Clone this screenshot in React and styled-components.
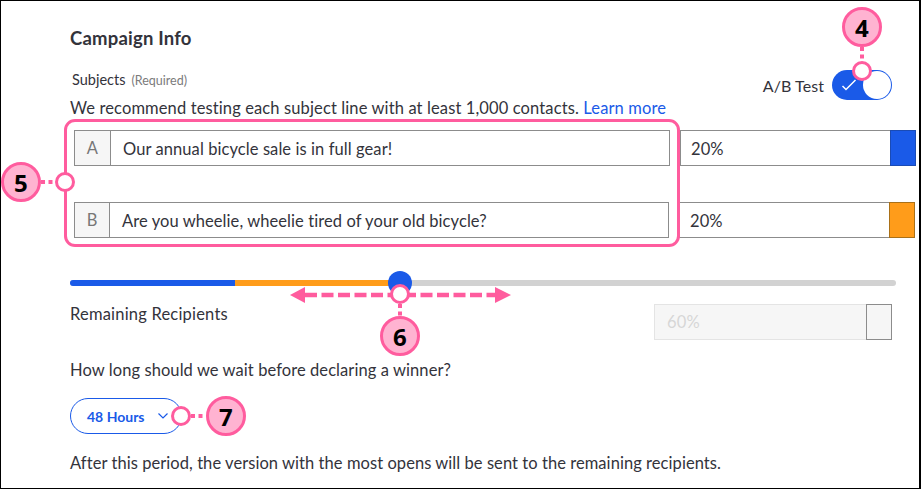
import React from 'react';
import styled, { createGlobalStyle } from 'styled-components';

const GlobalStyle = createGlobalStyle`
  html, body {
    margin: 0;
    padding: 0;
    background: #fff;
  }
  * {
    box-sizing: border-box;
  }
`;

const Frame = styled.div`
  position: relative;
  width: 921px;
  height: 489px;
  padding: 25px 0 0 69px;
  border: 1px solid #000;
  border-right-width: 2px;
  background: #fff;
  color: #33333b;
  font-family: Lato, "Liberation Sans", sans-serif;
  font-size: 16.5px;
  letter-spacing: 0.08px;
  overflow: hidden;
`;

const Column = styled.div`
  width: 826px;
`;

const Title = styled.h2`
  margin: 0 0 20px;
  font-size: 18.5px;
  font-weight: 700;
  letter-spacing: 0.2px;
  line-height: 24px;
`;

const TopRow = styled.div`
  display: flex;
  justify-content: space-between;
  height: 30px;
`;

const FieldLabel = styled.div`
  margin-left: 2px;
  font-size: 14.5px;
  letter-spacing: 0;
  line-height: 20px;
`;

const Required = styled.span`
  margin-left: 6px;
  font-size: 12.5px;
  color: #7b7b7b;
`;

const ToggleGroup = styled.div`
  display: flex;
  align-items: center;
  gap: 8px;
  margin-right: 4px;
  font-size: 16px;
`;

const Toggle = styled.div`
  display: flex;
  align-items: center;
  justify-content: space-between;
  width: 60px;
  height: 30px;
  padding: 0 1px 0 9px;
  border-radius: 15px;
  background: #1a5ae8;
`;

const Knob = styled.div`
  width: 28px;
  height: 28px;
  border-radius: 50%;
  background: #fff;
`;

const Hint = styled.p`
  margin: 0 0 14px;
  letter-spacing: 0.12px;
  line-height: 16px;
  white-space: nowrap;
`;

const LearnMore = styled.a`
  color: #1a5ae8;
  text-decoration: none;
`;

const SubjectRow = styled.div`
  display: flex;
  gap: 10px;
  width: ${props => props.$width}px;
  height: 36px;
  margin: 0 0 ${props => props.$below}px 4px;
`;

const SubjectInput = styled.div`
  display: flex;
  flex: 1;
  border: 1px solid #8c8c8c;
`;

const Prefix = styled.div`
  display: flex;
  align-items: center;
  justify-content: center;
  width: ${props => props.$width}px;
  border-right: 1px solid #8c8c8c;
  background: #f6f6f6;
  color: #777;
`;

const SubjectText = styled.div`
  display: flex;
  align-items: center;
  padding: 1px 0 0 12px;
`;

const PercentBox = styled.div`
  display: flex;
  width: 236px;
  border: 1px solid #8c8c8c;
`;

const PercentValue = styled.div`
  display: flex;
  flex: 1;
  align-items: center;
  padding: 1px 0 0 10px;
`;

const Swatch = styled.div`
  width: 26px;
  margin: -1px;
  border: 1px solid ${props => props.$edge};
  background: ${props => props.$fill};
`;

const Track = styled.div`
  position: relative;
  display: flex;
  height: 6px;
  margin-top: 42px;
  border-radius: 3px;
  background: #d2d2d2;
`;

const TrackPart = styled.div`
  width: ${props => props.$width}px;
  background: ${props => props.$fill};
  border-radius: ${props => props.$radius};
`;

const Thumb = styled.div`
  position: absolute;
  top: -9px;
  left: 318px;
  width: 24px;
  height: 24px;
  border-radius: 50%;
  background: #1a5ae8;
`;

const RemainingRow = styled.div`
  display: flex;
  justify-content: space-between;
  height: 36px;
  margin-top: 18px;
  letter-spacing: 0.2px;
  line-height: 20px;
`;

const DisabledBox = styled.div`
  display: flex;
  width: 238px;
  margin-right: 4px;
  border: 1px solid #e4e4e4;
  background: #f6f6f6;
`;

const DisabledValue = styled.div`
  display: flex;
  flex: 1;
  align-items: center;
  padding-left: 12px;
  color: #d6d6d6;
`;

const DisabledSquare = styled.div`
  width: 26px;
  margin: -1px;
  border: 1px solid #8c8c8c;
`;

const Paragraph = styled.p`
  margin: ${props => props.$top}px 0 0;
  letter-spacing: ${props => props.$spacing}px;
  line-height: 20px;
  white-space: nowrap;
`;

const Dropdown = styled.div`
  display: flex;
  align-items: center;
  gap: 13px;
  width: 112px;
  height: 36px;
  margin-top: 18px;
  padding-left: 16px;
  border: 1px solid #1a5ae8;
  border-radius: 18px;
  color: #1a5ae8;
  font-size: 14px;
  font-weight: 700;
  letter-spacing: 0;
`;

const Overlay = styled.svg`
  position: absolute;
  top: -1px;
  left: -1px;
  pointer-events: none;
`;

const Badge = styled.div`
  position: absolute;
  top: ${props => props.$y - 21}px;
  left: ${props => props.$x - 21}px;
  display: flex;
  align-items: center;
  justify-content: center;
  width: 40px;
  height: 40px;
  border: 3px solid #ff5c9e;
  border-radius: 50%;
  background: #ffb3d1;
  color: #000;
  font-family: "Open Sans", sans-serif;
  font-size: 24px;
  font-weight: 700;
`;

const Ring = styled.div`
  position: absolute;
  top: ${props => props.$y - 11}px;
  left: ${props => props.$x - 11}px;
  width: 20px;
  height: 20px;
  border: 3px solid #ff5c9e;
  border-radius: 50%;
  background: #fff;
`;

const PinkBox = styled.div`
  position: absolute;
  top: 118px;
  left: 63px;
  width: 616px;
  height: 128px;
  border: 3px solid #ff5c9e;
  border-radius: 11px;
`;

const annotations = [
  { n: 4, badge: [862, 27], ring: [862, 71] },
  { n: 5, badge: [21, 182], ring: [65, 182] },
  { n: 6, badge: [400, 336], ring: [400, 294] },
  { n: 7, badge: [226, 416], ring: [181, 416] },
];

const PINK = '#ff5c9e';

const App = () => (
  <>
    <GlobalStyle />
    <Frame>
      <Column>
        <Title>Campaign Info</Title>
        <TopRow>
          <FieldLabel>
            Subjects<Required>(Required)</Required>
          </FieldLabel>
          <ToggleGroup>
            A/B Test
            <Toggle>
              <svg width="16" height="12" viewBox="0 0 16 12" fill="none">
                <path d="M1.5 7 L5 10.5 L14.5 1" stroke="#fff" strokeWidth="1.5" />
              </svg>
              <Knob />
            </Toggle>
          </ToggleGroup>
        </TopRow>
        <Hint>
          We recommend testing each subject line with at least 1,000 contacts.{' '}
          <LearnMore>Learn more</LearnMore>
        </Hint>

        <SubjectRow $width={842} $below={36}>
          <SubjectInput>
            <Prefix $width={36}>A</Prefix>
            <SubjectText>Our annual bicycle sale is in full gear!</SubjectText>
          </SubjectInput>
          <PercentBox>
            <PercentValue>20%</PercentValue>
            <Swatch $fill="#1a5ae8" $edge="#1a4bb5" />
          </PercentBox>
        </SubjectRow>
        <SubjectRow $width={841} $below={0}>
          <SubjectInput>
            <Prefix $width={35}>B</Prefix>
            <SubjectText>Are you wheelie, wheelie tired of your old bicycle?</SubjectText>
          </SubjectInput>
          <PercentBox>
            <PercentValue>20%</PercentValue>
            <Swatch $fill="#ff9c1a" $edge="#a97018" />
          </PercentBox>
        </SubjectRow>

        <Track>
          <TrackPart $width={165} $fill="#1a5ae8" $radius="3px 0 0 3px" />
          <TrackPart $width={155} $fill="#ff9c1a" $radius="0" />
          <Thumb />
        </Track>

        <RemainingRow>
          Remaining Recipients
          <DisabledBox>
            <DisabledValue>60%</DisabledValue>
            <DisabledSquare />
          </DisabledBox>
        </RemainingRow>

        <Paragraph $top={20} $spacing={0.08}>How long should we wait before declaring a winner?</Paragraph>
        <Dropdown>
          48 Hours
          <svg width="10" height="6" viewBox="0 0 10 6" fill="none">
            <path d="M0.5 0.5 L5 5 L9.5 0.5" stroke="#1a5ae8" strokeWidth="1.2" />
          </svg>
        </Dropdown>
        <Paragraph $top={19} $spacing={0.06}>
          After this period, the version with the most opens will be sent to the remaining recipients.
        </Paragraph>
      </Column>

      <PinkBox />
      <Overlay width="921" height="489" viewBox="0 0 921 489" fill="none">
        <g stroke={PINK} strokeWidth="4" strokeDasharray="4 3.5">
          <line x1="862" y1="47" x2="862" y2="61" />
          <line x1="41" y1="182" x2="55" y2="182" />
          <line x1="400" y1="304" x2="400" y2="316" />
          <line x1="191" y1="416" x2="206" y2="416" />
        </g>
        <line x1="305" y1="295" x2="495" y2="295" stroke={PINK} strokeWidth="4.5" strokeDasharray="12 4.5" />
        <path d="M290 295 L305 287 L305 303 Z M511 295 L495 287 L495 303 Z" fill={PINK} />
      </Overlay>
      {annotations.map(a => (
        <React.Fragment key={a.n}>
          <Ring $x={a.ring[0]} $y={a.ring[1]} />
          <Badge $x={a.badge[0]} $y={a.badge[1]}>{a.n}</Badge>
        </React.Fragment>
      ))}
    </Frame>
  </>
);

export default App;
